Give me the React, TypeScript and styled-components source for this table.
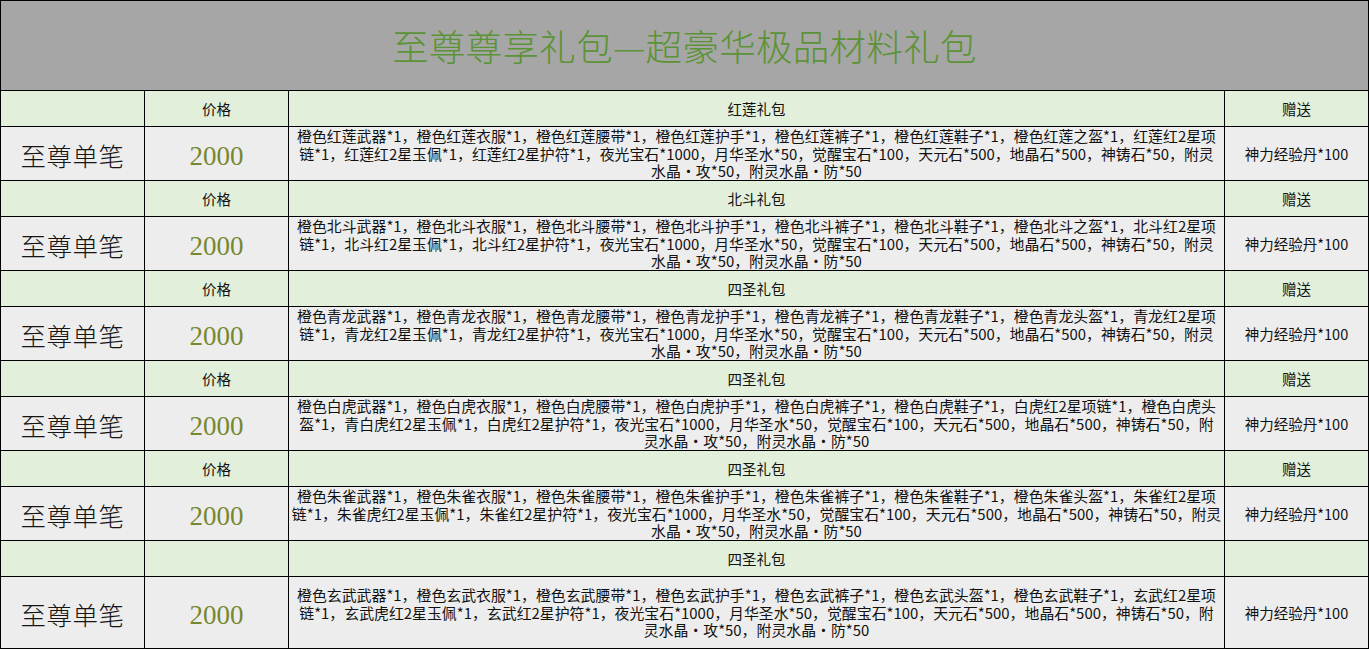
import React from "react";
import styled, { createGlobalStyle } from "styled-components";

const GlobalStyle = createGlobalStyle`
  html, body {
    margin: 0;
    padding: 0;
    background: #fff;
  }
  body {
    font-family: "Noto Sans CJK SC", "Noto Sans", sans-serif;
  }
`;

const Sheet = styled.div`
  display: grid;
  grid-template-columns: 143px 143px 935px 143px;
  gap: 1px;
  padding: 1px;
  width: 1369px;
  box-sizing: border-box;
  background: #000;
`;

const TitleCell = styled.div`
  grid-column: 1 / -1;
  height: 89px;
  background: #a6a6a6;
  color: #5b9336;
  font-size: 36.5px;
  font-weight: 300;
  display: flex;
  align-items: center;
  justify-content: center;
  letter-spacing: 0.3px;
`;

const HeadCell = styled.div`
  height: 35px;
  background: #e2efda;
  color: #111;
  font-size: 14.5px;
  display: flex;
  align-items: center;
  justify-content: center;
`;

const DataCell = styled.div<{ $tall?: boolean }>`
  height: ${(p) => (p.$tall ? "71px" : "53px")};
  background: #ededed;
  display: flex;
  flex-direction: column;
  align-items: center;
  justify-content: center;
  color: #111;
`;

const NameText = styled.span`
  font-size: 25.5px;
  font-weight: 300;
  letter-spacing: 0.5px;
  color: #151515;
  padding-top: 2px;
`;

const PriceText = styled.span`
  font-family: "Liberation Serif", "DejaVu Serif", serif;
  font-size: 27px;
  color: #76892f;
  padding-top: 5px;
`;

const DescLine = styled.span`
  font-size: 14.9px;
  line-height: 17.5px;
  white-space: nowrap;
`;

const GiftText = styled.span`
  font-size: 14.5px;
`;

type Pack = {
  showPrice: boolean;
  title: string;
  lines: string[];
  tall?: boolean;
};

const packs: Pack[] = [
  {
    showPrice: true,
    title: "红莲礼包",
    lines: [
      "橙色红莲武器*1，橙色红莲衣服*1，橙色红莲腰带*1，橙色红莲护手*1，橙色红莲裤子*1，橙色红莲鞋子*1，橙色红莲之盔*1，红莲红2星项",
      "链*1，红莲红2星玉佩*1，红莲红2星护符*1，夜光宝石*1000，月华圣水*50，觉醒宝石*100，天元石*500，地晶石*500，神铸石*50，附灵",
      "水晶·攻*50，附灵水晶·防*50",
    ],
  },
  {
    showPrice: true,
    title: "北斗礼包",
    lines: [
      "橙色北斗武器*1，橙色北斗衣服*1，橙色北斗腰带*1，橙色北斗护手*1，橙色北斗裤子*1，橙色北斗鞋子*1，橙色北斗之盔*1，北斗红2星项",
      "链*1，北斗红2星玉佩*1，北斗红2星护符*1，夜光宝石*1000，月华圣水*50，觉醒宝石*100，天元石*500，地晶石*500，神铸石*50，附灵",
      "水晶·攻*50，附灵水晶·防*50",
    ],
  },
  {
    showPrice: true,
    title: "四圣礼包",
    lines: [
      "橙色青龙武器*1，橙色青龙衣服*1，橙色青龙腰带*1，橙色青龙护手*1，橙色青龙裤子*1，橙色青龙鞋子*1，橙色青龙头盔*1，青龙红2星项",
      "链*1，青龙红2星玉佩*1，青龙红2星护符*1，夜光宝石*1000，月华圣水*50，觉醒宝石*100，天元石*500，地晶石*500，神铸石*50，附灵",
      "水晶·攻*50，附灵水晶·防*50",
    ],
  },
  {
    showPrice: true,
    title: "四圣礼包",
    lines: [
      "橙色白虎武器*1，橙色白虎衣服*1，橙色白虎腰带*1，橙色白虎护手*1，橙色白虎裤子*1，橙色白虎鞋子*1，白虎红2星项链*1，橙色白虎头",
      "盔*1，青白虎红2星玉佩*1，白虎红2星护符*1，夜光宝石*1000，月华圣水*50，觉醒宝石*100，天元石*500，地晶石*500，神铸石*50，附",
      "灵水晶·攻*50，附灵水晶·防*50",
    ],
  },
  {
    showPrice: true,
    title: "四圣礼包",
    lines: [
      "橙色朱雀武器*1，橙色朱雀衣服*1，橙色朱雀腰带*1，橙色朱雀护手*1，橙色朱雀裤子*1，橙色朱雀鞋子*1，橙色朱雀头盔*1，朱雀红2星项",
      "链*1，朱雀虎红2星玉佩*1，朱雀红2星护符*1，夜光宝石*1000，月华圣水*50，觉醒宝石*100，天元石*500，地晶石*500，神铸石*50，附灵",
      "水晶·攻*50，附灵水晶·防*50",
    ],
  },
  {
    showPrice: false,
    title: "四圣礼包",
    tall: true,
    lines: [
      "橙色玄武武器*1，橙色玄武衣服*1，橙色玄武腰带*1，橙色玄武护手*1，橙色玄武裤子*1，橙色玄武头盔*1，橙色玄武鞋子*1，玄武红2星项",
      "链*1，玄武虎红2星玉佩*1，玄武红2星护符*1，夜光宝石*1000，月华圣水*50，觉醒宝石*100，天元石*500，地晶石*500，神铸石*50，附",
      "灵水晶·攻*50，附灵水晶·防*50",
    ],
  },
];

const App = () => {
  return (
    <>
      <GlobalStyle />
      <Sheet>
        <TitleCell>至尊尊享礼包—超豪华极品材料礼包</TitleCell>
        {packs.map((pack, i) => (
          <React.Fragment key={i}>
            <HeadCell />
            <HeadCell>{pack.showPrice ? "价格" : ""}</HeadCell>
            <HeadCell>{pack.title}</HeadCell>
            <HeadCell>{pack.showPrice ? "赠送" : ""}</HeadCell>

            <DataCell $tall={pack.tall}>
              <NameText>至尊单笔</NameText>
            </DataCell>
            <DataCell $tall={pack.tall}>
              <PriceText>2000</PriceText>
            </DataCell>
            <DataCell $tall={pack.tall}>
              {pack.lines.map((line, j) => (
                <DescLine key={j}>{line}</DescLine>
              ))}
            </DataCell>
            <DataCell $tall={pack.tall}>
              <GiftText>神力经验丹*100</GiftText>
            </DataCell>
          </React.Fragment>
        ))}
      </Sheet>
    </>
  );
};

export default App;
